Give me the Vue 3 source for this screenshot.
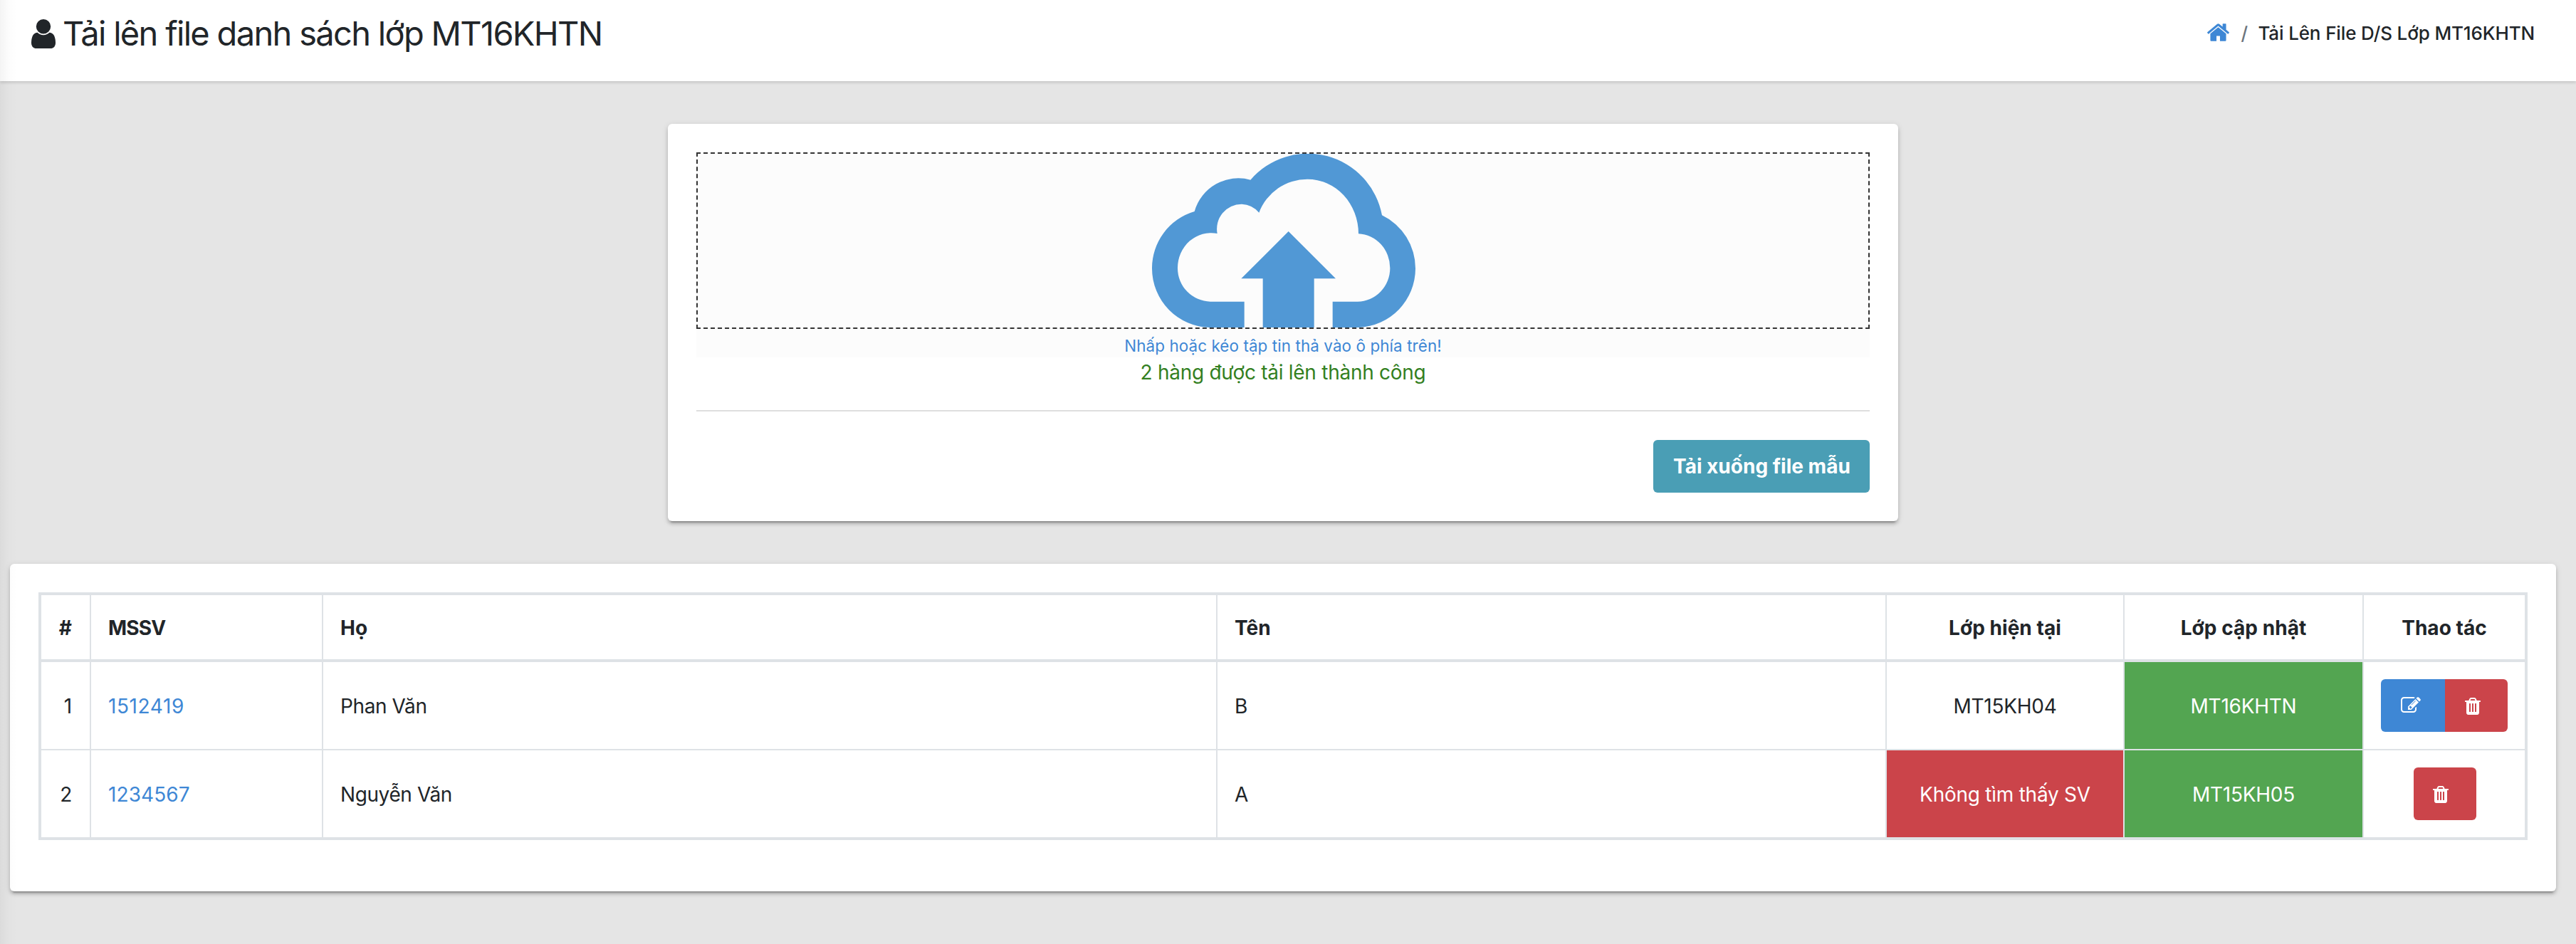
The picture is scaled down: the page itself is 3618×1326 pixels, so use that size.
<script setup>
const columns = [
  { key: 'index', label: '#', width: 70, cls: 'right' },
  { key: 'code', label: 'MSSV', width: 326, cls: 'code' },
  { key: 'last', label: 'Họ', width: 1256, cls: '' },
  { key: 'first', label: 'Tên', width: 940, cls: '' },
  { key: 'current', label: 'Lớp hiện tại', width: 334, cls: 'center' },
  { key: 'next', label: 'Lớp cập nhật', width: 336, cls: 'center' },
  { key: 'actions', label: 'Thao tác', width: 226, cls: 'center' },
]
const students = [
  { code: '1512419', last: 'Phan Văn', first: 'B', current: 'MT15KH04', next: 'MT16KHTN', found: true },
  { code: '1234567', last: 'Nguyễn Văn', first: 'A', current: 'Không tìm thấy SV', next: 'MT15KH05', found: false },
]
const trashPath = 'M704 1376v-704q0-14-9-23t-23-9h-64q-14 0-23 9t-9 23v704q0 14 9 23t23 9h64q14 0 23-9t9-23zm256 0v-704q0-14-9-23t-23-9h-64q-14 0-23 9t-9 23v704q0 14 9 23t23 9h64q14 0 23-9t9-23zm256 0v-704q0-14-9-23t-23-9h-64q-14 0-23 9t-9 23v704q0 14 9 23t23 9h64q14 0 23-9t9-23zm-544-992h448l-48-117q-7-9-17-11h-317q-10 2-17 11zm928 32v64q0 14-9 23t-23 9h-96v948q0 83-47 143.5t-113 60.5h-832q-66 0-113-58.5t-47-141.5v-952h-96q-14 0-23-9t-9-23v-64q0-14 9-23t23-9h309l70-167q15-37 54-63t79-26h320q40 0 79 26t54 63l70 167h309q14 0 23 9t9 23z'
const editPath = 'M888 1184l116-116-152-152-116 116v56h96v96h56zm440-720q-16-16-33 1l-350 350q-17 17-1 33t33-1l350-350q17-17 1-33zm80 594v190q0 119-84.5 203.5t-203.5 84.5h-832q-119 0-203.5-84.5t-84.5-203.5v-832q0-119 84.5-203.5t203.5-84.5h832q63 0 117 25 15 7 18 23 3 17-9 29l-49 49q-14 14-32 8-23-6-45-6h-832q-66 0-113 47t-47 113v832q0 66 47 113t113 47h832q66 0 113-47t47-113v-126q0-13 9-22l64-64q15-15 35-7t20 29zm-96-738l288 288-672 672h-288v-288zm444 132l-92 92-288-288 92-92q28-28 68-28t68 28l152 152q28 28 28 68t-28 68z'
</script>

<template>
  <div class="page">
    <header class="app-title">
      <h1>
        <svg class="user" viewBox="256 128 1280 1536"><path d="M1536 1399q0 109-62.5 187t-150.5 78h-854q-88 0-150.5-78t-62.5-187q0-85 8.5-160.5t31.5-152 58.5-131 94-89 134.5-34.5q131 128 313 128t313-128q76 0 134.5 34.5t94 89 58.5 131 31.5 152 8.5 160.5zm-256-887q0 159-112.5 271.5t-271.5 112.5-271.5-112.5-112.5-271.5 112.5-271.5 271.5-112.5 271.5 112.5 112.5 271.5z" /></svg>
        <span>Tải lên file danh sách lớp MT16KHTN</span>
      </h1>
      <nav class="breadcrumb">
        <svg class="home" viewBox="89 253 1614 1283"><path d="M1472 992v480q0 26-19 45t-45 19h-384v-384h-256v384h-384q-26 0-45-19t-19-45v-480q0-1 .5-3t.5-3l575-474 575 474q1 2 1 6zm223-69l-62 74q-8 9-21 11h-3q-13 0-21-7l-692-577-692 577q-12 8-24 7-13-2-21-11l-62-74q-8-10-7-23.5t11-21.5l719-599q32-26 76-26t76 26l244 204v-195q0-14 9-23t23-9h192q14 0 23 9t9 23v408l219 182q10 8 11 21.5t-7 23.5z" /></svg>
        <span class="slash">/</span>
        <span>Tải Lên File D/S Lớp MT16KHTN</span>
      </nav>
    </header>

    <section class="tile upload">
      <div class="dropzone">
        <div class="drop-area">
          <svg class="cloud" viewBox="174 78 1110 732">
            <path d="M563 810H418A249 249 0 0 1 174 562A249 249 0 0 1 353 321A192 192 0 0 1 589 188A318 318 0 0 1 1143 337A249 249 0 0 1 1284 562A249 249 0 0 1 1045 810H935V701H1040A139 141 0 0 0 1177 560A138 145 0 0 0 1044 415A215 230 0 0 0 829 185A217 217 0 0 0 625 326A102 102 0 0 0 552 290A105 105 0 0 0 449 414A141 147 0 0 0 282 560A141 141 0 0 0 420 701H563Z" />
            <path d="M749 405L948 604H857V810H641V604H550Z" />
          </svg>
        </div>
        <p class="hint">Nhấp hoặc kéo tập tin thả vào ô phía trên!</p>
      </div>
      <p class="success">2 hàng được tải lên thành công</p>
      <hr>
      <div class="footer">
        <button class="btn info">Tải xuống file mẫu</button>
      </div>
    </section>

    <section class="tile list">
      <table>
        <colgroup>
          <col v-for="c in columns" :key="c.key" :style="{ width: c.width + 'px' }">
        </colgroup>
        <thead>
          <tr>
            <th v-for="c in columns" :key="c.key" :class="c.cls">{{ c.label }}</th>
          </tr>
        </thead>
        <tbody>
          <tr v-for="(s, i) in students" :key="s.code">
            <td class="right">{{ i + 1 }}</td>
            <td class="code"><a :class="{ wide: i === 0 }">{{ s.code }}</a></td>
            <td class="last-name">{{ s.last }}</td>
            <td>{{ s.first }}</td>
            <td class="center" :class="{ danger: !s.found }">{{ s.current }}</td>
            <td class="center success-cell">{{ s.next }}</td>
            <td class="actions">
              <div class="group" :class="{ single: !s.found }">
                <button v-if="s.found" class="btn primary">
                  <svg class="edit" viewBox="0 128 1792 1408"><path :d="editPath" /></svg>
                </button>
                <button class="btn delete">
                  <svg class="trash" viewBox="192 128 1408 1536"><path :d="trashPath" /></svg>
                </button>
              </div>
            </td>
          </tr>
        </tbody>
      </table>
    </section>
    <div class="edge-shadow"></div>
  </div>
</template>

<style>
body {
  margin: 0;
  background: #e5e5e5;
}
</style>

<style scoped>
* {
  box-sizing: border-box;
}
.page {
  position: relative;
  height: 1326px;
  overflow: hidden;
  background: #e5e5e5;
  color: #212529;
  font: 400 28px/42px Inter, "Liberation Sans", sans-serif;
  letter-spacing: -0.25px;
}
svg {
  display: block;
  fill: currentColor;
  flex: none;
}
p {
  margin: 0;
}
.app-title {
  display: flex;
  justify-content: space-between;
  height: 114px;
  padding: 18px 58px 0 44px;
  background: #fff;
  box-shadow: 0 2px 4px rgba(0, 0, 0, 0.15);
}
h1 {
  display: flex;
  align-items: center;
  gap: 10px;
  height: 58px;
  margin: 0;
  font-size: 47px;
  font-weight: 400;
  line-height: 58px;
  letter-spacing: -1.68px;
}
.user {
  width: 34px;
  height: 41px;
}
.breadcrumb {
  display: flex;
  align-items: center;
  height: 57px;
  font-size: 26px;
  font-weight: 500;
  letter-spacing: -0.14px;
}
.home {
  width: 31px;
  height: 25px;
  margin: 0 16px 2px 0;
  color: #3e87d5;
}
.slash {
  width: 24px;
  color: #6c757d;
}
.tile {
  background: #fff;
  border-radius: 6px;
  box-shadow: 0 4px 4px rgba(0, 0, 0, 0.17), 0 2px 10px rgba(0, 0, 0, 0.12), 0 6px 2px -4px rgba(0, 0, 0, 0.2);
}
.upload {
  width: 1728px;
  height: 558px;
  margin: 60px 0 0 938px;
  padding: 40px;
}
.dropzone {
  height: 288px;
  background: #fcfcfc;
}
.drop-area {
  display: flex;
  justify-content: center;
  height: 248px;
  padding-left: 2px;
  border: 2px dashed #333;
}
.cloud {
  width: 370px;
  height: 244px;
  color: #5198d5;
}
.hint {
  padding-top: 7px;
  color: #3e87d5;
  font-size: 22.4px;
  line-height: 33px;
  letter-spacing: 0.1px;
  text-align: center;
}
.success {
  color: #33801f;
  letter-spacing: -0.27px;
  text-align: center;
}
hr {
  height: 2px;
  margin: 32px 0 40px;
  border: 0;
  background: #dedede;
}
.footer {
  display: flex;
  justify-content: flex-end;
}
.btn {
  display: flex;
  align-items: center;
  height: 74px;
  padding: 0 28px;
  border: 0;
  border-radius: 6px;
  color: #fff;
  font: inherit;
}
.info {
  width: 304px;
  background: #4a9eb5;
  font-weight: 700;
  letter-spacing: 0;
  white-space: nowrap;
}
.list {
  width: 3576px;
  height: 460px;
  margin: 60px 0 0 14px;
  padding: 40px;
}
table {
  width: 3496px;
  table-layout: fixed;
  border: 4px solid #dee2e6;
  border-spacing: 0;
}
th,
td {
  padding: 2px 24px 0;
  border-right: 2px solid #dee2e6;
  text-align: left;
  vertical-align: middle;
}
th {
  height: 94px;
  border-bottom: 4px solid #dee2e6;
  font-weight: 700;
  letter-spacing: 0.05px;
}
td {
  height: 124px;
  border-bottom: 2px solid #dee2e6;
}
tr > :last-child {
  border-right: 0;
}
tbody tr:last-child td {
  height: 122px;
  border-bottom: 0;
}
th.code {
  letter-spacing: -0.8px;
}
.last-name {
  letter-spacing: -0.4px;
}
.right {
  padding-right: 25px;
  text-align: right;
}
.center {
  text-align: center;
}
.code a {
  color: #3e87d5;
  letter-spacing: 0.1px;
}
.code a.wide {
  letter-spacing: 0.6px;
}
.danger {
  background: #cb444a;
  color: #fff;
}
.success-cell {
  background: #53a551;
  color: #fff;
}
td.actions {
  padding: 0;
}
.group {
  display: flex;
  justify-content: center;
}
.group.single {
  padding-left: 2px;
}
.group .btn {
  width: 88px;
  padding: 2px 0 0 27px;
}
.group .primary {
  width: 90px;
  padding: 0 0 2px 28px;
  border-radius: 6px 0 0 6px;
  background: #3e87d5;
}
.group .delete {
  background: #cb444a;
}
.group .primary + .delete {
  padding-left: 28px;
  border-radius: 0 6px 6px 0;
}
.edit {
  width: 28px;
  height: 22px;
}
.trash {
  width: 22px;
  height: 24px;
}
.edge-shadow {
  position: absolute;
  top: 0;
  left: 0;
  width: 24px;
  height: 100%;
  background: linear-gradient(to right, rgba(0, 0, 0, 0.045), rgba(0, 0, 0, 0.012) 50%, transparent);
}
</style>
